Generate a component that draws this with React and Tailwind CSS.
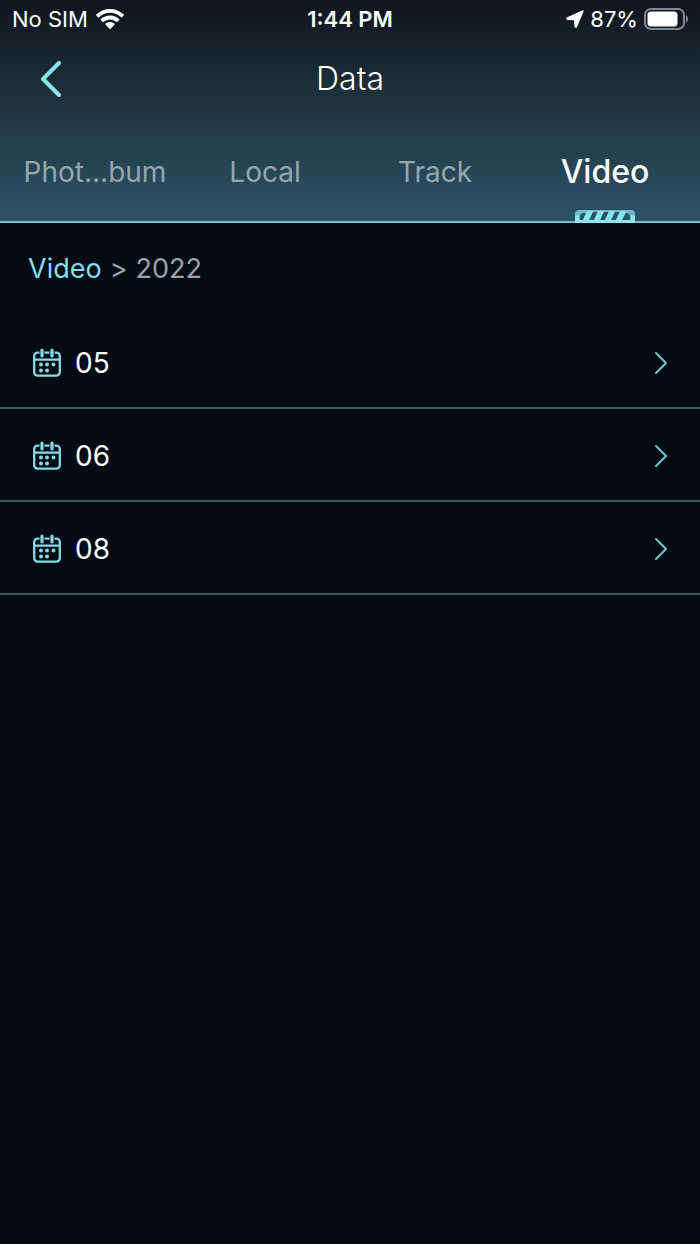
import { useState } from "react";

const tabs = ["Phot…bum", "Local", "Track", "Video"];
const months = ["05", "06", "08"];

function WifiIcon() {
  return (
    <svg className="w-7 h-[21px]" viewBox="0 0 28 21" fill="currentColor" aria-hidden="true">
      <path d="M14 0C8.700 0 3.900 2 0.300 5.500a.8.8 0 0 0 0 1.100l1.600 1.600a.8.8 0 0 0 1.100 0C5.900 5.400 9.800 3.800 14 3.800s8.100 1.600 11 4.400a.8.8 0 0 0 1.100 0l1.600-1.600a.8.8 0 0 0 0-1.100C24.100 2 19.300 0 14 0Z" />
      <path d="M14 6.500c-3.500 0-6.700 1.300-9.100 3.500a.8.8 0 0 0 0 1.200l1.700 1.600a.8.8 0 0 0 1.100 0c1.700-1.500 3.900-2.400 6.300-2.400s4.600.9 6.300 2.400a.8.8 0 0 0 1.100 0l1.700-1.600a.8.8 0 0 0 0-1.200c-2.400-2.200-5.600-3.500-9.100-3.500Z" />
      <path d="M14 13c-1.700 0-3.200.6-4.400 1.600a.8.8 0 0 0 0 1.200l3.800 3.900a.8.8 0 0 0 1.200 0l3.800-3.900a.8.8 0 0 0 0-1.200C17.200 13.600 15.700 13 14 13Z" />
    </svg>
  );
}

function LocationIcon() {
  return (
    <svg className="w-[18px] h-[18px]" viewBox="0 0 18 18" fill="currentColor" stroke="currentColor" strokeWidth="1.5" strokeLinejoin="round" aria-hidden="true">
      <path d="M17 1 1 8.300 1.200 9.200 8.800 9.500 9.200 16.800 10.200 17Z" />
    </svg>
  );
}

function BatteryIcon() {
  return (
    <svg className="w-11 h-[22px]" viewBox="0 0 44 22" aria-hidden="true">
      <rect x="1" y="1" width="39" height="20" rx="6" fill="none" stroke="#80888e" strokeWidth="2" />
      <rect x="3.500" y="3.500" width="30" height="15" rx="3.500" fill="white" />
      <path d="M42 7.500c1.300.5 2 1.900 2 3.500s-.7 3-2 3.500Z" fill="#80888e" />
    </svg>
  );
}

function CalendarIcon() {
  return (
    <svg className="w-7 h-[29px] text-[#84dbe6]" viewBox="0 0 28 29" fill="none" stroke="currentColor" aria-hidden="true">
      <path d="M6.500 4.700H4.500A3.300 3.300 0 0 0 1.200 8v16.300a3.300 3.300 0 0 0 3.300 3.300h19a3.300 3.300 0 0 0 3.300-3.300V8a3.300 3.300 0 0 0-3.300-3.300h-2M11.500 4.700h5M1.200 11.700h25.600" strokeWidth="2.300" />
      <path d="M9 2v6M19 2v6" strokeWidth="3.200" strokeLinecap="round" />
      <path d="M8 16.500h0M14 16.500h0M20.500 16.500h0M8 22.500h0M14 22.500h0" strokeWidth="4" strokeLinecap="round" />
    </svg>
  );
}

// striped marker under the selected tab
function TabMarker() {
  return (
    <svg className="absolute -bottom-0.5 left-1/2 -translate-x-1/2 w-[60px] h-[13px]" viewBox="0 0 60 13" aria-hidden="true">
      <path d="M0 13V4a4 4 0 0 1 4-4h52a4 4 0 0 1 4 4v9Z" fill="#6fb8c7" />
      <path d="M5 10V7q0-4 4-4h2L8 10ZM14 10 18 2h5L19 10ZM25 10 29 2h5L30 10ZM36 10 40 2h5L41 10ZM47 10 51 3q4 0 4 4v3Z" fill="#2b5266" />
      <path d="M8 10 12 1h6L14 10ZM19 10 23 1h6L25 10ZM30 10 34 1h6L36 10ZM41 10 45 1h6L47 10ZM0 13V6l4-1v5h52V5l4 1v7Z" fill="#8ae4ef" />
    </svg>
  );
}

export default function App() {
  const [activeTab, setActiveTab] = useState("Video");

  return (
    <div className="min-h-screen bg-[#030b14] font-['Inter','Liberation_Sans',sans-serif] text-white">
      <header className="bg-linear-to-b from-[#0e151e] via-[#203642] to-[#2d5266] border-b-2 border-[#77bdcb]">
        <div className="grid grid-cols-3 items-center h-[38px] px-3 text-[22px] leading-7">
          <div className="flex items-center gap-2">
            <span>No SIM</span>
            <WifiIcon />
          </div>
          <div className="text-center font-semibold">1:44 PM</div>
          <div className="flex items-center justify-end gap-1.5">
            <LocationIcon />
            <span>87%</span>
            <BatteryIcon />
          </div>
        </div>

        <div className="grid grid-cols-3 items-center h-[82px] px-10">
          <button type="button" aria-label="Back" className="w-6 text-[#8ae4ef]">
            <svg className="w-[22px] h-9" viewBox="0 0 22 36" fill="none" stroke="currentColor" strokeWidth="4" strokeLinecap="round" strokeLinejoin="round" aria-hidden="true">
              <path d="M19 2 3 18l16 16" />
            </svg>
          </button>
          <h1 className="text-center text-[32px] leading-9 font-light">Data</h1>
        </div>

        <nav className="grid grid-cols-4 h-[101px] px-2.5">
          {tabs.map((tab) => (
            <button
              key={tab}
              type="button"
              onClick={() => setActiveTab(tab)}
              className={
                tab === activeTab
                  ? "relative pt-0.5 text-[32px] font-medium text-white"
                  : "relative pt-0.5 text-[28px] text-[#95a6ae]"
              }
            >
              {tab}
              {tab === activeTab && <TabMarker />}
            </button>
          ))}
        </nav>
      </header>

      <main>
        <div className="flex items-center gap-2 h-[93px] px-7 text-[27px] text-[#9ca3a9]">
          <a href="#video" className="text-[#84dfe9]">Video</a>
          <span>&gt;</span>
          <span>2022</span>
        </div>

        <ul>
          {months.map((month) => (
            <li key={month} className="border-b-2 border-[#35555d]">
              <a href={`#${month}`} className="flex items-center h-[91px] pt-0.5 pl-[33px] pr-8">
                <CalendarIcon />
                <span className="ml-3.5 flex-1 text-[28px]">{month}</span>
                <svg className="w-3.5 h-6 text-[#72c4d2]" viewBox="0 0 14 24" fill="none" stroke="currentColor" strokeWidth="2" strokeLinecap="round" strokeLinejoin="round" aria-hidden="true">
                  <path d="M2 2l10 10L2 22" />
                </svg>
              </a>
            </li>
          ))}
        </ul>
      </main>
    </div>
  );
}
